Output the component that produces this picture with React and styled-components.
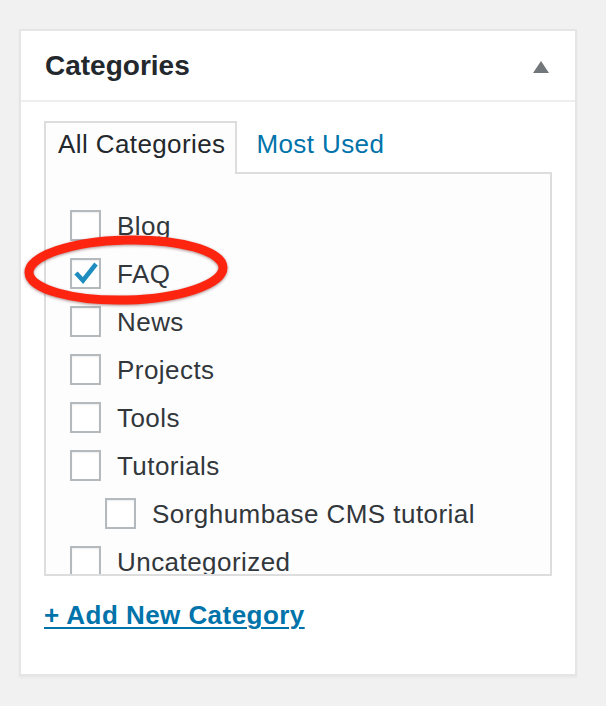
import React from 'react';
import styled, { createGlobalStyle } from 'styled-components';

const GlobalStyle = createGlobalStyle`
  body {
    margin: 0;
    background: #f1f1f1;
    font-family: "Liberation Sans", Arial, sans-serif;
  }
`;

const categories = [
  { name: 'Blog' },
  { name: 'FAQ', checked: true },
  { name: 'News' },
  { name: 'Projects' },
  { name: 'Tools' },
  { name: 'Tutorials' },
  { name: 'Sorghumbase CMS tutorial', depth: 1 },
  { name: 'Uncategorized' },
];

const App = () => {
  return (
    <Page>
      <GlobalStyle />
      <Panel>
        <Header>
          <Title>Categories</Title>
          <Toggle width="16" height="12" viewBox="0 0 16 12">
            <polygon points="8,0 16,12 0,12" fill="#72777c" />
          </Toggle>
        </Header>
        <Body>
          <Tabs>
            <Tab $active>All Categories</Tab>
            <Tab>Most Used</Tab>
          </Tabs>
          <ListBox>
            {categories.map((c) => (
              <Row key={c.name} $depth={c.depth || 0}>
                <Checkbox>
                  {c.checked && (
                    <svg width="27" height="27" viewBox="0 0 27 27">
                      <polyline
                        points="4,13 11,20.5 24,4"
                        fill="none"
                        stroke="#1e8cbe"
                        strokeWidth="4.5"
                        strokeLinejoin="miter"
                      />
                    </svg>
                  )}
                </Checkbox>
                <Label>{c.name}</Label>
              </Row>
            ))}
          </ListBox>
          <AddLink href="#">+ Add New Category</AddLink>
        </Body>
      </Panel>
      <Highlight width="214" height="84" viewBox="0 0 214 84">
        <ellipse
          cx="106"
          cy="40"
          rx="97"
          ry="30"
          fill="none"
          stroke="#fd2410"
          strokeWidth="9"
          transform="rotate(-1.5 106 40)"
        />
      </Highlight>
    </Page>
  );
};

export default App;

const Page = styled.div`
  position: relative;
  padding: 29px 29px 30px 19px;
`;

const Panel = styled.div`
  width: 558px;
  height: 647px;
  box-sizing: border-box;
  background: #fff;
  border: 2px solid #e5e5e5;
  box-shadow: 0 2px 2px rgba(0, 0, 0, 0.04);
`;

const Header = styled.div`
  height: 69px;
  display: flex;
  align-items: center;
  justify-content: space-between;
  padding: 0 26px 0 24px;
  border-bottom: 2px solid #eee;
`;

const Title = styled.h2`
  margin: 0;
  font-size: 28px;
  font-weight: 700;
  color: #23282d;
`;

const Toggle = styled.svg`
  display: block;
  margin-top: 2px;
`;

const Body = styled.div`
  padding: 19px 23px 0 23px;
`;

const Tabs = styled.div`
  display: flex;
  align-items: flex-end;
`;

const Tab = styled.div`
  position: relative;
  z-index: 1;
  height: 53px;
  box-sizing: border-box;
  padding: 5px 10px 0 12px;
  margin-left: ${(p) => (p.$active ? '0' : '5px')};
  margin-bottom: -2px;
  border: 2px solid ${(p) => (p.$active ? '#ddd' : 'transparent')};
  border-bottom: 0;
  background: ${(p) => (p.$active ? '#fdfdfd' : 'transparent')};
  color: ${(p) => (p.$active ? '#23282d' : '#0073aa')};
  font-size: 26px;
  line-height: 32px;
  letter-spacing: 0.4px;
`;

const ListBox = styled.div`
  height: 404px;
  box-sizing: border-box;
  border: 2px solid #ddd;
  background: #fdfdfd;
  overflow: hidden;
  padding: 27.5px 0 0 24px;
`;

const Row = styled.div`
  display: flex;
  align-items: center;
  gap: 16px;
  height: 48px;
  padding-left: ${(p) => p.$depth * 35}px;
`;

const Checkbox = styled.span`
  width: 31px;
  height: 31px;
  box-sizing: border-box;
  flex-shrink: 0;
  border: 2px solid #b4b9be;
  background: #fff;
  box-shadow: inset 0 1px 2px rgba(0, 0, 0, 0.07);
  display: flex;
  align-items: center;
  justify-content: center;
`;

const Label = styled.span`
  font-size: 26px;
  line-height: 32px;
  color: #32373c;
  letter-spacing: 0.45px;
  white-space: nowrap;
`;

const AddLink = styled.a`
  display: inline-block;
  margin-top: 23px;
  font-size: 26px;
  font-weight: 700;
  line-height: 32px;
  letter-spacing: 0.45px;
  color: #0073aa;
  text-decoration: underline;
  text-decoration-thickness: 2px;
  text-underline-offset: 3px;
`;

const Highlight = styled.svg`
  position: absolute;
  left: 20px;
  top: 230px;
  pointer-events: none;
  filter: drop-shadow(0 1px 1.5px rgba(80, 0, 0, 0.45));
`;
